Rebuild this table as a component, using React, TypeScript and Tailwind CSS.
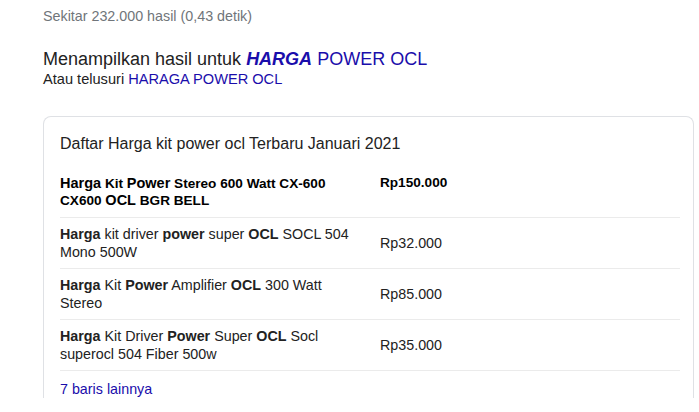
const rows = [
  {
    name: (
      <>
        <b>Harga</b> kit driver <b>power</b> super <b>OCL</b> SOCL 504 Mono 500W
      </>
    ),
    price: "Rp32.000",
  },
  {
    name: (
      <>
        <b>Harga</b> Kit <b>Power</b> Amplifier <b>OCL</b> 300 Watt Stereo
      </>
    ),
    price: "Rp85.000",
  },
  {
    name: (
      <>
        <b>Harga</b> Kit Driver <b>Power</b> Super <b>OCL</b> Socl superocl 504 Fiber 500w
      </>
    ),
    price: "Rp35.000",
  },
];

export default function App() {
  return (
    <div
      className="w-[699px] h-[412px] overflow-hidden bg-white pl-[43px] text-[#222]"
      style={{ fontFamily: '"Liberation Sans", Arial, sans-serif' }}
    >
      <div className="pt-[7px] h-[40px] text-[14.3px] leading-[18px] text-[#70757a]">
        Sekitar 232.000 hasil (0,43 detik)
      </div>

      <div className="pt-[8px]">
        <div className="text-[18px] leading-[22px]">
          Menampilkan hasil untuk{" "}
          <a className="text-[#1a0dab]">
            <b>
              <i>HARGA</i>
            </b>{" "}
            POWER OCL
          </a>
        </div>
        <div className="text-[14.6px] leading-[18px]">
          Atau telusuri <a className="text-[#1a0dab]">HARAGA POWER OCL</a>
        </div>
      </div>

      <div className="mt-[28px] w-[651px] rounded-t-[8px] border border-[#dfe1e5] border-b-0 pl-[16px] pr-[13px] pt-[16px]">
        <div className="text-[16px] leading-[22px]">
          Daftar Harga kit power ocl Terbaru Januari 2021
        </div>

        <table className="mt-[20px] w-full border-collapse">
          <thead>
            <tr className="border-b border-[#ebebeb]">
              <th className="w-[320px] pb-[8px] pr-[16px] text-left align-top text-[13.6px] leading-[16px] font-bold text-black">
                <b className="text-[14.5px]">Harga</b> Kit <b className="text-[14.5px]">Power</b> Stereo 600 Watt CX-600 CX600{" "}
                <b className="text-[14.5px]">OCL</b> BGR BELL
              </th>
              <th className="pb-[8px] text-left align-top text-[13.6px] leading-[16px] font-bold text-black">
                Rp150.000
              </th>
            </tr>
          </thead>
          <tbody>
            {rows.map((r) => (
              <tr key={r.price} className="border-b border-[#ebebeb]">
                <td className="py-[7px] pr-[16px] align-middle text-[14.3px] leading-[18px]">
                  {r.name}
                </td>
                <td className="py-[7px] align-middle text-[14.3px] leading-[18px]">
                  {r.price}
                </td>
              </tr>
            ))}
          </tbody>
        </table>

        <div className="pt-[9px] text-[14.3px] leading-[18px] text-[#1a0dab]">
          7 baris lainnya
        </div>
      </div>
    </div>
  );
}
